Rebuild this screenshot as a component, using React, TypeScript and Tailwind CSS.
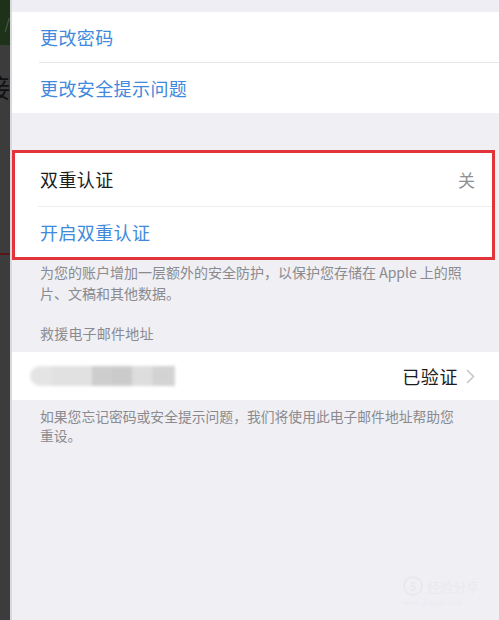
import React from "react";

const font = { fontFamily: '"Noto Sans CJK SC", "Noto Sans", sans-serif' };

export default function App() {
  return (
    <div className="flex w-[499px] h-[620px] overflow-hidden" style={font}>
      {/* left strip of the neighbouring screenshot */}
      <div className="w-[10px] flex flex-col bg-[#3b3c3b] overflow-hidden shrink-0">
        <div className="h-[45px] bg-[#1e3119] flex items-center justify-end text-[#4c6a44] text-[14px] leading-none overflow-hidden">/</div>
        <div className="h-[26px]" />
        <div className="h-[32px] flex justify-end items-center overflow-hidden">
          <span className="text-[26px] leading-none text-[#111] whitespace-nowrap">接</span>
        </div>
        <div className="h-[150px]" />
        <div className="h-[2px] bg-[#5a1616]" />
      </div>
      <div className="w-[2px] bg-[#d9d9dd] shrink-0" />

      {/* main settings page */}
      <div className="flex-1 bg-[#efeff4] flex flex-col">
        <div className="h-[12px] bg-[#eeeef4]" />
        <div className="bg-white flex flex-col">
          <div className="h-[50px] flex items-center pl-[28px] text-[18px] tracking-[0.4px] text-[#4089dc]">更改密码</div>
          <div className="h-px bg-[#e6e6ea] ml-[27px]" />
          <div className="h-[50px] flex items-center pl-[28px] text-[18px] tracking-[0.4px] text-[#4089dc]">更改安全提示问题</div>
        </div>

        <div className="h-[37px]" />

        <div className="mr-[4px] border-[3px] border-[#e2353a] bg-white flex flex-col">
          <div className="h-[53px] flex items-center justify-between pl-[25px] pr-[17px]">
            <span className="text-[18px] tracking-[0.4px] text-[#1c1c1e]">双重认证</span>
            <span className="text-[17px] text-[#8e8e93]">关</span>
          </div>
          <div className="h-px bg-[#eeeef2] ml-[23px]" />
          <div className="h-[50px] flex items-center pl-[25px] text-[18px] tracking-[0.4px] text-[#4089dc]">开启双重认证</div>
        </div>

        <div className="pl-[28px] pr-[12px] pt-[2px] text-[14px] leading-[21px] text-[#8a8a8f]">
          <div className="whitespace-nowrap">为您的账户增加一层额外的安全防护，以保护您存储在 Apple 上的照</div>
          <div>片、文稿和其他数据。</div>
        </div>

        <div className="h-[19px]" />
        <div className="pl-[28px] text-[14px] leading-[20px] tracking-[0.2px] text-[#8a8a8f]">救援电子邮件地址</div>
        <div className="h-[9px]" />

        <div className="bg-white h-[48px] flex items-center justify-between pl-[18px] pr-[24px]">
          <div className="flex h-[20px] blur-[1.5px] opacity-90">
            <div className="w-[22px] bg-[#e2e2e2] rounded-l-full" />
            <div className="w-[40px] bg-[#dedede]" />
            <div className="w-[20px] bg-[#c9c9c9]" />
            <div className="w-[20px] bg-[#c6c6c6]" />
            <div className="w-[20px] bg-[#dadada]" />
            <div className="w-[23px] bg-[#cfcfcf]" />
          </div>
          <div className="flex items-center gap-[8px]">
            <span className="text-[18px] tracking-[0.6px] text-[#1c1c1e]">已验证</span>
            <svg width="9" height="15" viewBox="0 0 9 15" fill="none">
              <path d="M1 1l6.5 6.5L1 14" stroke="#c7c7cc" strokeWidth="1.6" />
            </svg>
          </div>
        </div>

        <div className="pl-[28px] pr-[12px] pt-[7px] text-[13.8px] leading-[19px] text-[#8a8a8f]">
          <div className="whitespace-nowrap">如果您忘记密码或安全提示问题，我们将使用此电子邮件地址帮助您</div>
          <div>重设。</div>
        </div>

        <div className="flex-1" />
        <div className="flex justify-end pr-[20px] pb-[14px]">
          <div className="flex flex-col gap-[3px] opacity-50">
            <div className="flex items-center gap-[4px]">
              <div className="w-[20px] h-[20px] rounded-full border-[2px] border-[#e2e2e8] flex items-center justify-center text-[11px] font-bold text-[#e2e2e8] leading-none">S</div>
              <span className="text-[13px] leading-none text-[#e2e2e8]">经验分享</span>
            </div>
            <span className="text-[7px] leading-none text-[#e4e4ea]">www.jingyan.com</span>
          </div>
        </div>
      </div>
    </div>
  );
}
